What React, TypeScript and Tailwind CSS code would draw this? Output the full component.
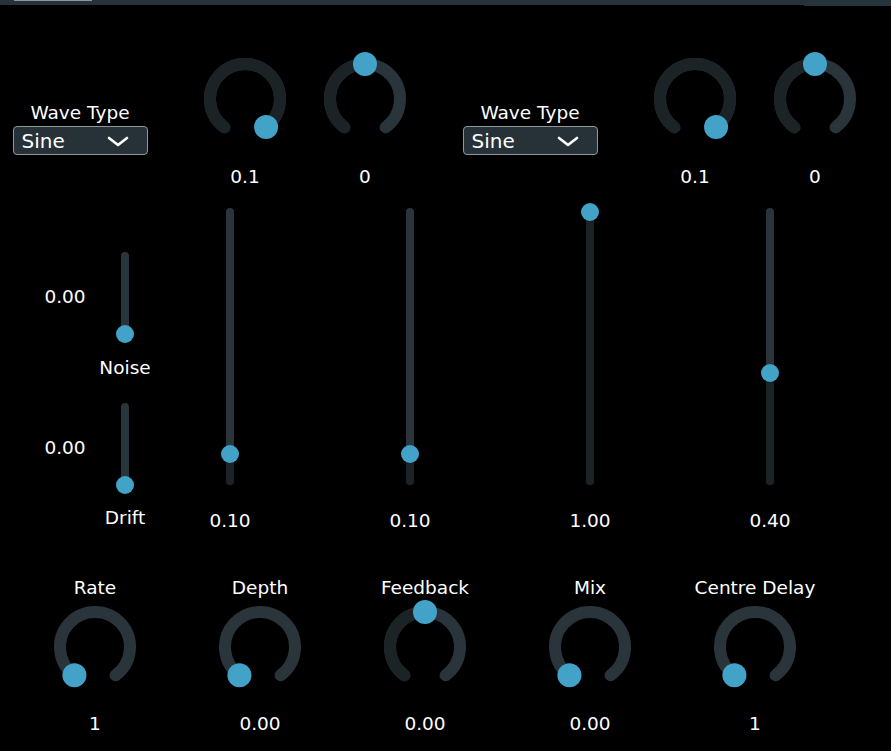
import React from "react";

function pt(a: number, r = 35, c = 48): [number, number] {
  const rad = (a * Math.PI) / 180;
  return [c + r * Math.sin(rad), c - r * Math.cos(rad)];
}

function arc(a0: number, a1: number) {
  const [x0, y0] = pt(a0);
  const [x1, y1] = pt(a1);
  const large = a1 - a0 > 180 ? 1 : 0;
  return `M ${x0} ${y0} A 35 35 0 ${large} 1 ${x1} ${y1}`;
}

function Knob({ angle }: { angle: number }) {
  const [tx, ty] = pt(angle);
  return (
    <svg width="96" height="96" viewBox="0 0 96 96" className="block">
      <path d={arc(-144, 144)} stroke="#29343b" strokeWidth="12" fill="none" strokeLinecap="round" />
      {angle > -143 && (
        <path d={arc(-144, angle)} stroke="#1b2327" strokeWidth="12" fill="none" strokeLinecap="round" />
      )}
      <circle cx={tx} cy={ty} r="12" fill="#42a2c8" />
    </svg>
  );
}

function VSlider({ value }: { value: number }) {
  const thumbY = 4 + (1 - value) * 269;
  return (
    <div className="relative w-[8px] h-[277px] rounded-full bg-[#29343b]">
      <div
        className="absolute left-0 bottom-0 w-[8px] rounded-full bg-[#1b2327]"
        style={{ height: 277 - thumbY + 4 }}
      />
      <div
        className="absolute left-[-5px] w-[18px] h-[18px] rounded-full bg-[#42a2c8]"
        style={{ top: thumbY - 9 }}
      />
    </div>
  );
}

function SmallSlider() {
  return (
    <div className="relative w-[8px] h-[86px] rounded-full bg-[#29343b]">
      <div className="absolute left-[-5px] top-[73px] w-[18px] h-[18px] rounded-full bg-[#42a2c8]" />
    </div>
  );
}

function Combo() {
  return (
    <div className="mt-[2px] w-[135px] h-[29px] rounded-[4px] border border-[#8e989b] bg-[#263238] flex items-center justify-between pl-[8px] pr-[18px]">
      <span className="text-[20px] leading-[24px]">Sine</span>
      <svg width="22" height="12" viewBox="0 0 22 12" className="block">
        <path d="M2 3 L11 10 L20 3" stroke="#ffffff" strokeWidth="2.6" fill="none" strokeLinecap="round" strokeLinejoin="round" />
      </svg>
    </div>
  );
}

function TopKnob({ angle, value }: { angle: number; value: string }) {
  return (
    <div className="w-[120px] pt-[45px] flex flex-col items-center">
      <Knob angle={angle} />
      <div className="mt-[19px] text-[18.5px] leading-[22px]">{value}</div>
    </div>
  );
}

function TopGroup() {
  return (
    <div className="flex w-[450px] shrink-0">
      <div className="w-[160px] pt-[96px] flex flex-col items-center">
        <div className="text-[18.5px] leading-[22px]">Wave Type</div>
        <Combo />
      </div>
      <div className="ml-[25px] flex">
        <TopKnob angle={143} value="0.1" />
        <TopKnob angle={0} value="0" />
      </div>
    </div>
  );
}

const bigSliders = [
  { v: 0.1, t: "0.10" },
  { v: 0.1, t: "0.10" },
  { v: 1, t: "1.00" },
  { v: 0.4, t: "0.40" },
];

const bottomKnobs = [
  { label: "Rate", angle: -144, value: "1" },
  { label: "Depth", angle: -144, value: "0.00" },
  { label: "Feedback", angle: 0, value: "0.00" },
  { label: "Mix", angle: -144, value: "0.00" },
  { label: "Centre Delay", angle: -144, value: "1" },
];

export default function App() {
  return (
    <div className="w-[891px] h-[751px] bg-black overflow-hidden text-white font-['DejaVu_Sans',sans-serif]">
      <div className="flex h-[6px] items-start">
        <div className="flex-1 h-[5px] bg-[#27333a]">
          <div className="ml-[14px] w-[78px] h-[1px] bg-[#8e989b]" />
        </div>
        <div className="w-[87px] h-[6px] bg-[#27333a]" />
      </div>

      <div className="flex h-[189px]">
        <TopGroup />
        <TopGroup />
      </div>

      <div className="flex h-[365px]">
        <div className="w-[150px] shrink-0 flex flex-col">
          <div className="mt-[57px] flex items-center">
            <div className="ml-[30px] w-[70px] pt-[3px] text-center text-[18.5px] leading-[22px]">0.00</div>
            <div className="w-[50px] flex justify-center">
              <SmallSlider />
            </div>
          </div>
          <div className="mt-[19px] ml-[75px] w-[100px] text-center text-[18.5px] leading-[22px]">Noise</div>
          <div className="mt-[24px] flex items-center">
            <div className="ml-[30px] w-[70px] pt-[3px] text-center text-[18.5px] leading-[22px]">0.00</div>
            <div className="w-[50px] flex justify-center">
              <SmallSlider />
            </div>
          </div>
          <div className="mt-[18px] ml-[75px] w-[100px] text-center text-[18.5px] leading-[22px]">Drift</div>
        </div>
        <div className="ml-[40px] flex gap-[100px]">
          {bigSliders.map((s, i) => (
            <div key={i} className="w-[80px] pt-[13px] flex flex-col items-center">
              <VSlider value={s.v} />
              <div className="mt-[25px] text-[18.5px] leading-[22px]">{s.t}</div>
            </div>
          ))}
        </div>
      </div>

      <div className="flex pl-[12.5px]">
        {bottomKnobs.map((k, i) => (
          <div key={i} className="w-[165px] shrink-0 pt-[17px] flex flex-col items-center">
            <div className="text-[18.5px] leading-[22px] whitespace-nowrap">{k.label}</div>
            <div>
              <Knob angle={k.angle} />
            </div>
            <div className="mt-[18px] text-[18.5px] leading-[22px]">{k.value}</div>
          </div>
        ))}
      </div>
    </div>
  );
}
